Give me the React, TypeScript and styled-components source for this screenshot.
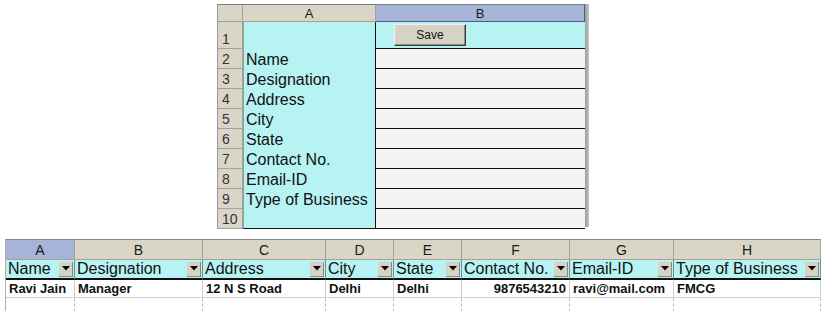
import styled, { createGlobalStyle } from "styled-components";

const GlobalStyle = createGlobalStyle`
  html, body {
    margin: 0;
    padding: 0;
    background: #ffffff;
  }
  body {
    font-family: "Liberation Sans", Arial, sans-serif;
  }
`;

const Page = styled.div`
  width: 825px;
  height: 311px;
  overflow: hidden;
  display: flex;
  flex-direction: column;
  background: #ffffff;
`;

// ---------- top form sheet ----------

const FormWrap = styled.div`
  margin: 4px 0 0 217px;
  display: flex;
  align-items: stretch;
`;

const FormSheet = styled.div`
  display: grid;
  grid-template-columns: 25px 133px 209px;
  grid-template-rows: 17px 27px repeat(9, 20px);
  border-top: 1px solid #7c7c7c;
  border-left: 1px solid #9a9a9a;
  background: #f4f4f4;
`;

const Shadow = styled.div`
  width: 4px;
  background: linear-gradient(to right, #9c9c9c, #c4c4c4);
  margin-bottom: 2px;
`;

const ColHead = styled.div<{ $active?: boolean }>`
  background: ${(p) => (p.$active ? "#a6b4d8" : "#d9d6c8")};
  border-right: 1px solid ${(p) => (p.$active ? "#4b5a86" : "#a6a395")};
  border-bottom: 1px solid ${(p) => (p.$active ? "#4b5a86" : "#a6a395")};
  font-size: 13px;
  color: #1a1a1a;
  display: flex;
  align-items: center;
  justify-content: center;
  box-sizing: border-box;
`;

const RowHead = styled.div`
  background: #d9d6c8;
  border-right: 1px solid #a6a395;
  border-bottom: 1px solid #a6a395;
  font-size: 14px;
  color: #333;
  display: flex;
  align-items: flex-end;
  padding: 0 0 1px 4px;
  box-sizing: border-box;
`;

const LabelCell = styled.div<{ $last?: boolean }>`
  background: #b8f3f3;
  border-left: 1px solid #7da8a8;
  border-right: 1px solid #111;
  border-bottom: ${(p) => (p.$last ? "1px solid #111" : "none")};
  font-size: 16px;
  line-height: 18px;
  color: #111;
  display: flex;
  align-items: flex-end;
  padding: 0 0 0 2px;
  box-sizing: border-box;
  white-space: nowrap;
`;

const ValueCell = styled.div`
  background: #f4f4f4;
  border-bottom: 1px solid #111;
  box-sizing: border-box;
`;

const ButtonCell = styled.div`
  background: #b8f3f3;
  border-bottom: 1px solid #111;
  display: flex;
  align-items: flex-start;
  padding: 2px 0 0 18px;
  box-sizing: border-box;
`;

const SaveButton = styled.button`
  width: 72px;
  height: 22px;
  background: #d6d2c4;
  border: 1px solid;
  border-color: #f4f2ea #3c3c3c #3c3c3c #f4f2ea;
  box-shadow: inset -1px -1px 0 #8e8b80;
  font-family: "Liberation Sans", Arial, sans-serif;
  font-size: 12px;
  color: #111;
  padding: 0;
`;

// ---------- bottom list sheet ----------

const ListSheet = styled.div`
  margin: 10px 0 0 5px;
  display: grid;
  grid-template-columns: 69px 128px 123px 68px 68px 108px 104px 147px;
  grid-template-rows: 20px 20px 18px 14px;
  width: 815px;
  border-top: 1px solid #8a8a8a;
  border-left: 1px solid #b0b0b0;
`;

const ListHead = styled(ColHead)`
  font-size: 14px;
  border-right: 1px solid #a6a395;
  border-bottom: 1px solid #a6a395;
`;

const FilterCell = styled.div`
  background: #b8f3f3;
  border-right: 1px solid #6f8e8e;
  border-bottom: 2px solid #111;
  font-size: 16px;
  color: #111;
  display: flex;
  align-items: center;
  justify-content: space-between;
  padding-left: 2px;
  box-sizing: border-box;
  white-space: nowrap;
  overflow: hidden;
`;

const DropButton = styled.span`
  width: 14px;
  height: 15px;
  margin-right: 1px;
  background: #d6d2c4;
  border-right: 1px solid #8a877c;
  border-bottom: 1px solid #8a877c;
  display: flex;
  align-items: center;
  justify-content: center;
  box-sizing: border-box;
  flex-shrink: 0;
`;

const DataCell = styled.div<{ $right?: boolean }>`
  background: #fff;
  border-right: 1px solid #d0d0d0;
  border-bottom: 1px solid #d0d0d0;
  font-size: 13px;
  font-weight: bold;
  color: #111;
  display: flex;
  align-items: center;
  justify-content: ${(p) => (p.$right ? "flex-end" : "flex-start")};
  padding: 0 3px;
  box-sizing: border-box;
  white-space: nowrap;
`;

const EmptyCell = styled.div`
  background: #fff;
  border-right: 1px dashed #b8b8b8;
`;

const Arrow = () => (
  <svg width="8" height="5" viewBox="0 0 8 5">
    <path d="M0 0h8L4 4.5z" fill="#000" />
  </svg>
);

const labels = [
  "Name",
  "Designation",
  "Address",
  "City",
  "State",
  "Contact No.",
  "Email-ID",
  "Type of Business",
  "",
];

const columns = ["A", "B", "C", "D", "E", "F", "G", "H"];

const records = [
  { text: "Ravi Jain" },
  { text: "Manager" },
  { text: "12 N S Road" },
  { text: "Delhi" },
  { text: "Delhi" },
  { text: "9876543210", right: true },
  { text: "ravi@mail.com" },
  { text: "FMCG" },
];

export default function App() {
  return (
    <>
      <GlobalStyle />
      <Page>
        <FormWrap>
          <FormSheet>
            <ColHead />
            <ColHead>A</ColHead>
            <ColHead $active>B</ColHead>

            <RowHead>1</RowHead>
            <LabelCell />
            <ButtonCell>
              <SaveButton>Save</SaveButton>
            </ButtonCell>

            {labels.flatMap((label, i) => [
              <RowHead key={"r" + i}>{i + 2}</RowHead>,
              <LabelCell key={"l" + i} $last={i === labels.length - 1}>
                {label}
              </LabelCell>,
              <ValueCell key={"v" + i} />,
            ])}
          </FormSheet>
          <Shadow />
        </FormWrap>

        <ListSheet>
          {columns.map((c, i) => (
            <ListHead key={c} $active={i === 0}>
              {c}
            </ListHead>
          ))}
          {labels.slice(0, 8).map((label) => (
            <FilterCell key={label}>
              {label}
              <DropButton>
                <Arrow />
              </DropButton>
            </FilterCell>
          ))}
          {records.map((r, i) => (
            <DataCell key={i} $right={r.right}>
              {r.text}
            </DataCell>
          ))}
          {columns.map((c) => (
            <EmptyCell key={"e" + c} />
          ))}
        </ListSheet>
      </Page>
    </>
  );
}
